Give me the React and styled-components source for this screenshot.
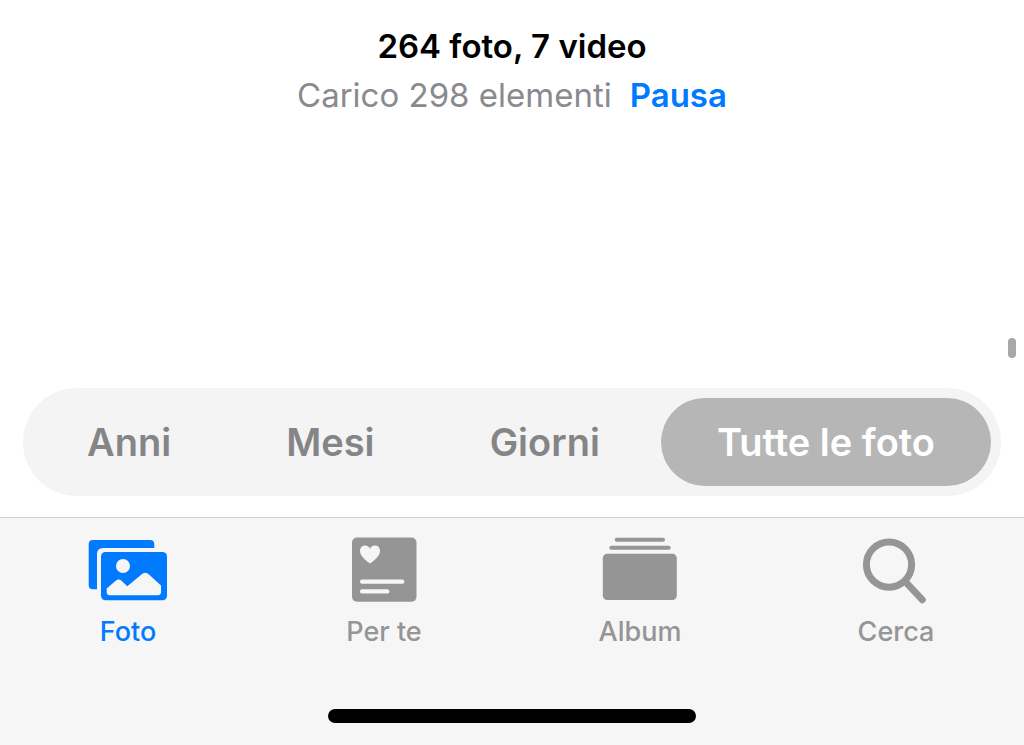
import React, { useState } from 'react';
import styled, { createGlobalStyle } from 'styled-components';

const theme = {
  text: '#000000',
  muted: '#8a8a8e',
  accent: '#007aff',
  bar: '#f6f6f6',
  pill: '#f4f4f4',
  pillActive: '#b6b6b6',
  icon: '#959595',
  segment: '#858587',
};

const GlobalStyle = createGlobalStyle`
  * {
    box-sizing: border-box;
  }

  body {
    margin: 0;
    background: #ffffff;
    font-family: Inter, 'Liberation Sans', sans-serif;
  }
`;

const Page = styled.div`
  position: relative;
  min-height: 100vh;

  display: flex;
  flex-direction: column;
`;

const Summary = styled.main`
  flex: 1;
  padding-top: 22px;

  text-align: center;
`;

const Title = styled.h1`
  margin: 0;

  color: ${theme.text};
  font-size: 33px;
  font-weight: 600;
  line-height: 49px;
`;

const Status = styled.div`
  display: flex;
  justify-content: center;
  gap: 18px;

  color: ${theme.muted};
  font-size: 33px;
  line-height: 49px;
`;

const Pause = styled.button`
  padding: 0;
  border: 0;
  background: none;

  color: ${theme.accent};
  font: inherit;
  font-weight: 600;

  cursor: pointer;
`;

const ScrollThumb = styled.div`
  position: absolute;
  top: 338px;
  right: 8px;
  width: 8px;
  height: 20px;

  border-radius: 4px;
  background: #a8a8a8;
`;

const Segments = styled.div`
  margin: 0 23px 21px;
  padding: 10px;

  display: flex;
  justify-content: space-between;

  border-radius: 54px;
  background: ${theme.pill};
`;

const Segment = styled.button`
  height: 88px;
  padding: 0 ${({ $active }) => ($active ? '56px' : '54px')};
  border: 0;
  border-radius: 44px;

  background: ${({ $active }) => ($active ? theme.pillActive : 'transparent')};
  color: ${({ $active }) => ($active ? '#ffffff' : theme.segment)};
  font-family: inherit;
  font-size: 38px;
  font-weight: 600;
  white-space: nowrap;

  cursor: pointer;
`;

const BottomBar = styled.footer`
  padding-bottom: 22px;

  border-top: 1px solid #cfcfcf;
  background: ${theme.bar};
`;

const Tabs = styled.nav`
  display: grid;
  grid-template-columns: repeat(4, 1fr);
`;

const Tab = styled.a`
  padding-top: 18px;

  display: flex;
  flex-direction: column;
  align-items: center;
  gap: 10px;

  color: ${({ $active }) => ($active ? theme.accent : theme.icon)};
  font-size: 27px;
  font-weight: 500;
  line-height: 36px;
  text-decoration: none;
`;

const Icon = styled.svg`
  display: block;
  width: 84px;
  height: 68px;

  fill: currentColor;
`;

const HomeIndicator = styled.div`
  width: 36%;
  height: 14px;
  margin: 59px auto 0;

  border-radius: 7px;
  background: #000000;
`;

function PhotosIcon() {
  return (
    <Icon viewBox="0 0 84 68" aria-hidden="true">
      <path d="M7 4H64Q68.3 4 68.3 8.3V12H17Q11 12 11 18V53.3H7Q2.7 53.3 2.7 49V8.3Q2.7 4 7 4Z" />
      <rect x="15" y="16" width="66" height="48.3" rx="4.5" />
      <circle cx="37" cy="30" r="7" fill={theme.bar} />
      <path
        d="M20.7 52.5L29.7 44.8Q32.7 42.3 35.5 44.8L41.3 50.3L55.5 38.4Q59.3 35.2 63 38.4L75 49.5V56Q75 59.3 71.7 59.3H24Q20.7 59.3 20.7 56Z"
        fill={theme.bar}
      />
    </Icon>
  );
}

function ForYouIcon() {
  return (
    <Icon viewBox="0 0 84 68" aria-hidden="true">
      <rect x="10" y="1.5" width="64.5" height="64.3" rx="5" />
      <path
        d="M28 27.4C25 25.4 18 20.4 18 15C18 11.8 20.2 9.6 23 9.6C25.2 9.6 27 10.8 28 12.8C29 10.8 30.8 9.6 33 9.6C35.8 9.6 38 11.8 38 15C38 20.4 31 25.4 28 27.4Z"
        fill={theme.bar}
      />
      <rect x="18" y="43.6" width="44.4" height="4.2" rx="2.1" fill={theme.bar} />
      <rect x="18" y="53.2" width="29.4" height="4.4" rx="2.2" fill={theme.bar} />
    </Icon>
  );
}

function AlbumIcon() {
  return (
    <Icon viewBox="0 0 84 68" aria-hidden="true">
      <rect x="16.7" y="1.7" width="50.3" height="4" rx="2" />
      <rect x="11.3" y="9.7" width="61.4" height="4" rx="2" />
      <rect x="4.8" y="17.8" width="74" height="46.3" rx="4.5" />
    </Icon>
  );
}

function SearchIcon() {
  return (
    <Icon viewBox="0 0 84 68" aria-hidden="true">
      <g fill="none" stroke="currentColor" strokeLinecap="round">
        <circle cx="35" cy="28.6" r="22.6" strokeWidth="7" />
        <path d="M51.5 45.8L68.4 63.8" strokeWidth="6.8" />
      </g>
    </Icon>
  );
}

const segments = ['Anni', 'Mesi', 'Giorni', 'Tutte le foto'];

const tabs = [
  { id: 'foto', label: 'Foto', Glyph: PhotosIcon },
  { id: 'per-te', label: 'Per te', Glyph: ForYouIcon },
  { id: 'album', label: 'Album', Glyph: AlbumIcon },
  { id: 'cerca', label: 'Cerca', Glyph: SearchIcon },
];

function App() {
  const [segment, setSegment] = useState('Tutte le foto');
  const [tab, setTab] = useState('foto');

  return (
    <Page>
      <GlobalStyle />
      <Summary>
        <Title>264 foto, 7 video</Title>
        <Status>
          <span>Carico 298 elementi</span>
          <Pause type="button">Pausa</Pause>
        </Status>
      </Summary>
      <ScrollThumb />

      <Segments>
        {segments.map((name) => (
          <Segment
            key={name}
            type="button"
            $active={segment === name}
            aria-pressed={segment === name}
            onClick={() => setSegment(name)}
          >
            {name}
          </Segment>
        ))}
      </Segments>

      <BottomBar>
        <Tabs>
          {tabs.map(({ id, label, Glyph }) => (
            <Tab
              key={id}
              href={`#${id}`}
              $active={tab === id}
              aria-current={tab === id ? 'page' : undefined}
              onClick={() => setTab(id)}
            >
              <Glyph />
              {label}
            </Tab>
          ))}
        </Tabs>
        <HomeIndicator />
      </BottomBar>
    </Page>
  );
}

export default App;
